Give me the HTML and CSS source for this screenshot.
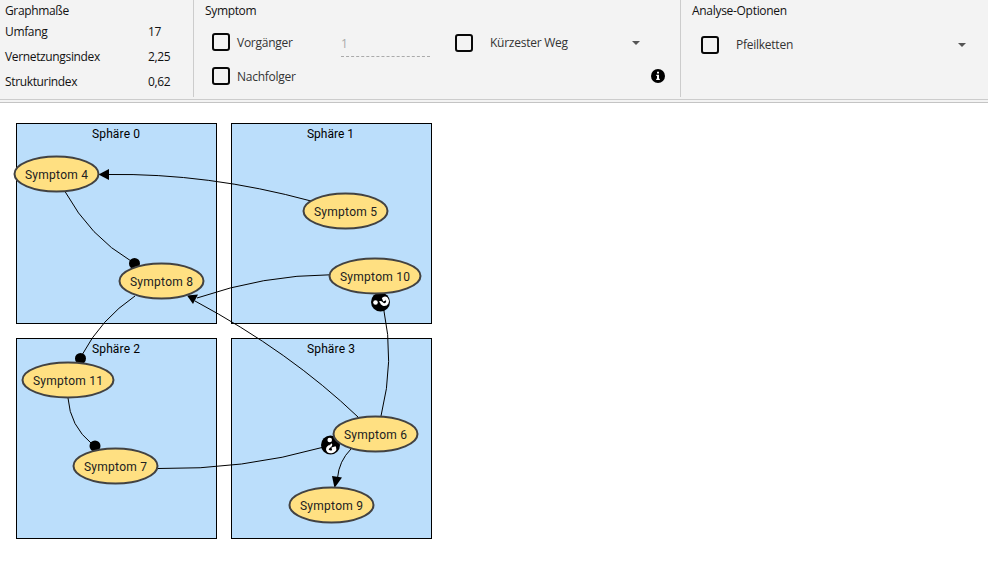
FILE: index.html
```html
<!DOCTYPE html>
<html lang="de">
<head>
<meta charset="utf-8">
<title>Graphmaße</title>
<link rel="stylesheet" href="styles.css">
</head>
<body>
<header class="toolbar">
  <section class="panel metrics">
    <h2>Graphmaße</h2>
    <dl>
      <dt>Umfang</dt><dd>17</dd>
      <dt>Vernetzungsindex</dt><dd>2,25</dd>
      <dt>Strukturindex</dt><dd>0,62</dd>
    </dl>
  </section>
  <section class="panel symptom">
    <h2>Symptom</h2>
    <div class="row">
      <label class="check"><span class="box"></span><span>Vorgänger</span></label>
      <span class="depth">1</span>
      <span class="box lower"></span>
      <span class="select path-select"><span>Kürzester Weg</span><i class="caret"></i></span>
    </div>
    <div class="row second">
      <label class="check"><span class="box"></span><span>Nachfolger</span></label>
      <svg class="info" width="14" height="14" viewBox="0 0 14 14"><circle cx="7" cy="7" r="7"/><path class="mark" d="M6 2.700h2v1.800H6zM5.300 5.700H8v4h.8V11H5.200V9.700H6V7h-.7z"/></svg>
    </div>
  </section>
  <section class="panel analysis">
    <h2>Analyse-Optionen</h2>
    <div class="row">
      <span class="box"></span>
      <span class="select"><span>Pfeilketten</span><i class="caret"></i></span>
    </div>
  </section>
</header>
<main>
<svg class="graph" width="988" height="459" viewBox="0 103 988 459">
  <g class="spheres">
    <rect x="16.500" y="123.500" width="200" height="200"/>
    <rect x="231.500" y="123.500" width="200" height="200"/>
    <rect x="16.500" y="338.500" width="200" height="200"/>
    <rect x="231.500" y="338.500" width="200" height="200"/>
  </g>
  <g class="label">
    <text x="116" y="138" textLength="48">Sphäre 0</text>
    <text x="330.500" y="138" textLength="47">Sphäre 1</text>
    <text x="116" y="353" textLength="48">Sphäre 2</text>
    <text x="331" y="353" textLength="48">Sphäre 3</text>
  </g>
  <g class="edges">
    <path d="M311 201Q208 173 108 174.500"/>
    <path d="M65 191.500Q90 237 131 261"/>
    <path d="M330 274.800Q264 275 197 298"/>
    <path d="M135 296Q101 319 82 355"/>
    <path d="M68 398Q70 426 92 444"/>
    <path d="M158 468.500Q243 470 322 447.500"/>
    <path d="M358 417Q290 352 195 301"/>
    <path d="M381 416Q395 361 383.500 308"/>
    <path d="M351 449Q339 461 337.500 478"/>
  </g>
  <g class="tips">
    <path d="M98.500 174.500L109 169V180Z"/>
    <path d="M187 295.500L198 294.500L193 304Z"/>
    <path d="M334.500 488L332 476L342 477.500Z"/>
    <circle cx="134.500" cy="263.500" r="5.500"/>
    <circle cx="80.500" cy="358.500" r="5.500"/>
    <circle cx="95" cy="446" r="5.500"/>
    <circle cx="380.500" cy="302" r="9.500"/>
    <circle cx="330.500" cy="445" r="9.500"/>
  </g>
  <g class="question">
    <circle cx="375.500" cy="302.500" r="2.300"/>
    <path d="M379.800 302.500C381 301.500 382 304.300 384 304.700C387 304.800 388.500 301.500 387 299.200C386 297.500 384.500 297.700 383.500 298.500L384.500 301"/>
    <circle cx="329.700" cy="440" r="2.300"/>
    <path d="M330.500 444.300C332 445.500 328.500 446.500 327.500 448.500C326.700 450.500 329 452.300 331.500 451.800C334 451.300 335.500 449.800 334.800 448L331.800 448.800"/>
  </g>
  <g class="nodes">
    <ellipse cx="56.500" cy="174" rx="42" ry="17.500"/>
    <ellipse cx="161.500" cy="281" rx="42" ry="17.500"/>
    <ellipse cx="345.500" cy="211" rx="42" ry="17.500"/>
    <ellipse cx="375" cy="276" rx="45.500" ry="17.500"/>
    <ellipse cx="68" cy="380" rx="45.500" ry="17.500"/>
    <ellipse cx="115.500" cy="466" rx="42" ry="17.500"/>
    <ellipse cx="375.500" cy="434" rx="42" ry="17.500"/>
    <ellipse cx="331.500" cy="505" rx="42" ry="17.500"/>
  </g>
  <g class="label node-label">
    <text x="56.500" y="179" textLength="63">Symptom 4</text>
    <text x="161.500" y="286" textLength="63">Symptom 8</text>
    <text x="345.500" y="216" textLength="63">Symptom 5</text>
    <text x="375" y="281" textLength="70">Symptom 10</text>
    <text x="68" y="385" textLength="70">Symptom 11</text>
    <text x="115.500" y="471" textLength="63">Symptom 7</text>
    <text x="375.500" y="439" textLength="63">Symptom 6</text>
    <text x="331.500" y="510" textLength="63">Symptom 9</text>
  </g>
</svg>
</main>
</body>
</html>
```
FILE: styles.css
```css
* { box-sizing: border-box; }
body {
  margin: 0;
  background: #fff;
  font: 12px/16px "Open Sans", "Noto Sans", sans-serif;
  letter-spacing: -0.35px;
  color: #111;
}
.toolbar {
  display: grid;
  grid-template-columns: 194px 487px 1fr;
  height: 103px;
  padding-bottom: 2px;
  background: #f3f3f3;
  border-bottom: 1px solid #c4c4c4;
  align-items: start;
}
.toolbar::after {
  content: "";
  grid-column: 1 / -1;
  height: 1px;
  margin-top: 2px;
  background: #ccc;
}
.panel { height: 97px; padding-top: 3px; border-right: 1px solid #ccc; }
.metrics { padding-left: 5px; }
.symptom { padding-left: 11px; }
.analysis { padding-left: 11px; border-right: 0; }
h2 { margin: 0; font: inherit; }
.analysis h2 { letter-spacing: -0.3px; }
dl { display: grid; grid-template-columns: 143px 1fr; grid-auto-rows: 25px; margin: 0; padding-top: 5px; }
dd { margin: 0; }
.row { display: flex; align-items: center; height: 34px; margin-top: 6px; padding-left: 7px; color: #333; letter-spacing: -0.25px; }
.row span > span, .check > span:last-child { padding-top: 2px; }
.row.second { margin-top: 0; padding-right: 15px; justify-content: space-between; }
.check { display: flex; align-items: center; gap: 7px; }
.symptom .check { width: 129px; }
.box { flex: none; width: 18px; height: 18px; border: 2px solid #080808; border-radius: 3px; }
.box.lower { margin-top: 2px; }
.depth { width: 89px; height: 28px; padding-top: 7px; margin: 2px 25px 0 0; border-bottom: 1px dashed #aaa; color: #aaa; }
.select { display: flex; align-items: center; justify-content: space-between; }
.path-select { width: 150px; margin-left: 17px; }
.caret { margin-top: 2px; border: 4px solid transparent; border-top-color: #555; border-bottom: 0; }
.mark { fill: #fff; }
.analysis .row { margin-top: 9px; padding-left: 9px; }
.analysis .select { width: 230px; margin-left: 17px; }
.analysis .select span, .analysis .caret { padding-top: 0; margin-top: 0; }
.graph { display: block; }
.spheres { fill: #bbdefb; stroke: #000; }
.edges { fill: none; stroke: #000; }
.nodes { fill: #ffe082; stroke: #424242; stroke-width: 2; }
.label { font: 12px Roboto, sans-serif; letter-spacing: 0; text-anchor: middle; fill: #000; }
.node-label { fill: #212121; }
.question { fill: none; stroke: #fff; stroke-width: 2.8; }
.question circle { fill: #fff; stroke: none; }
```
